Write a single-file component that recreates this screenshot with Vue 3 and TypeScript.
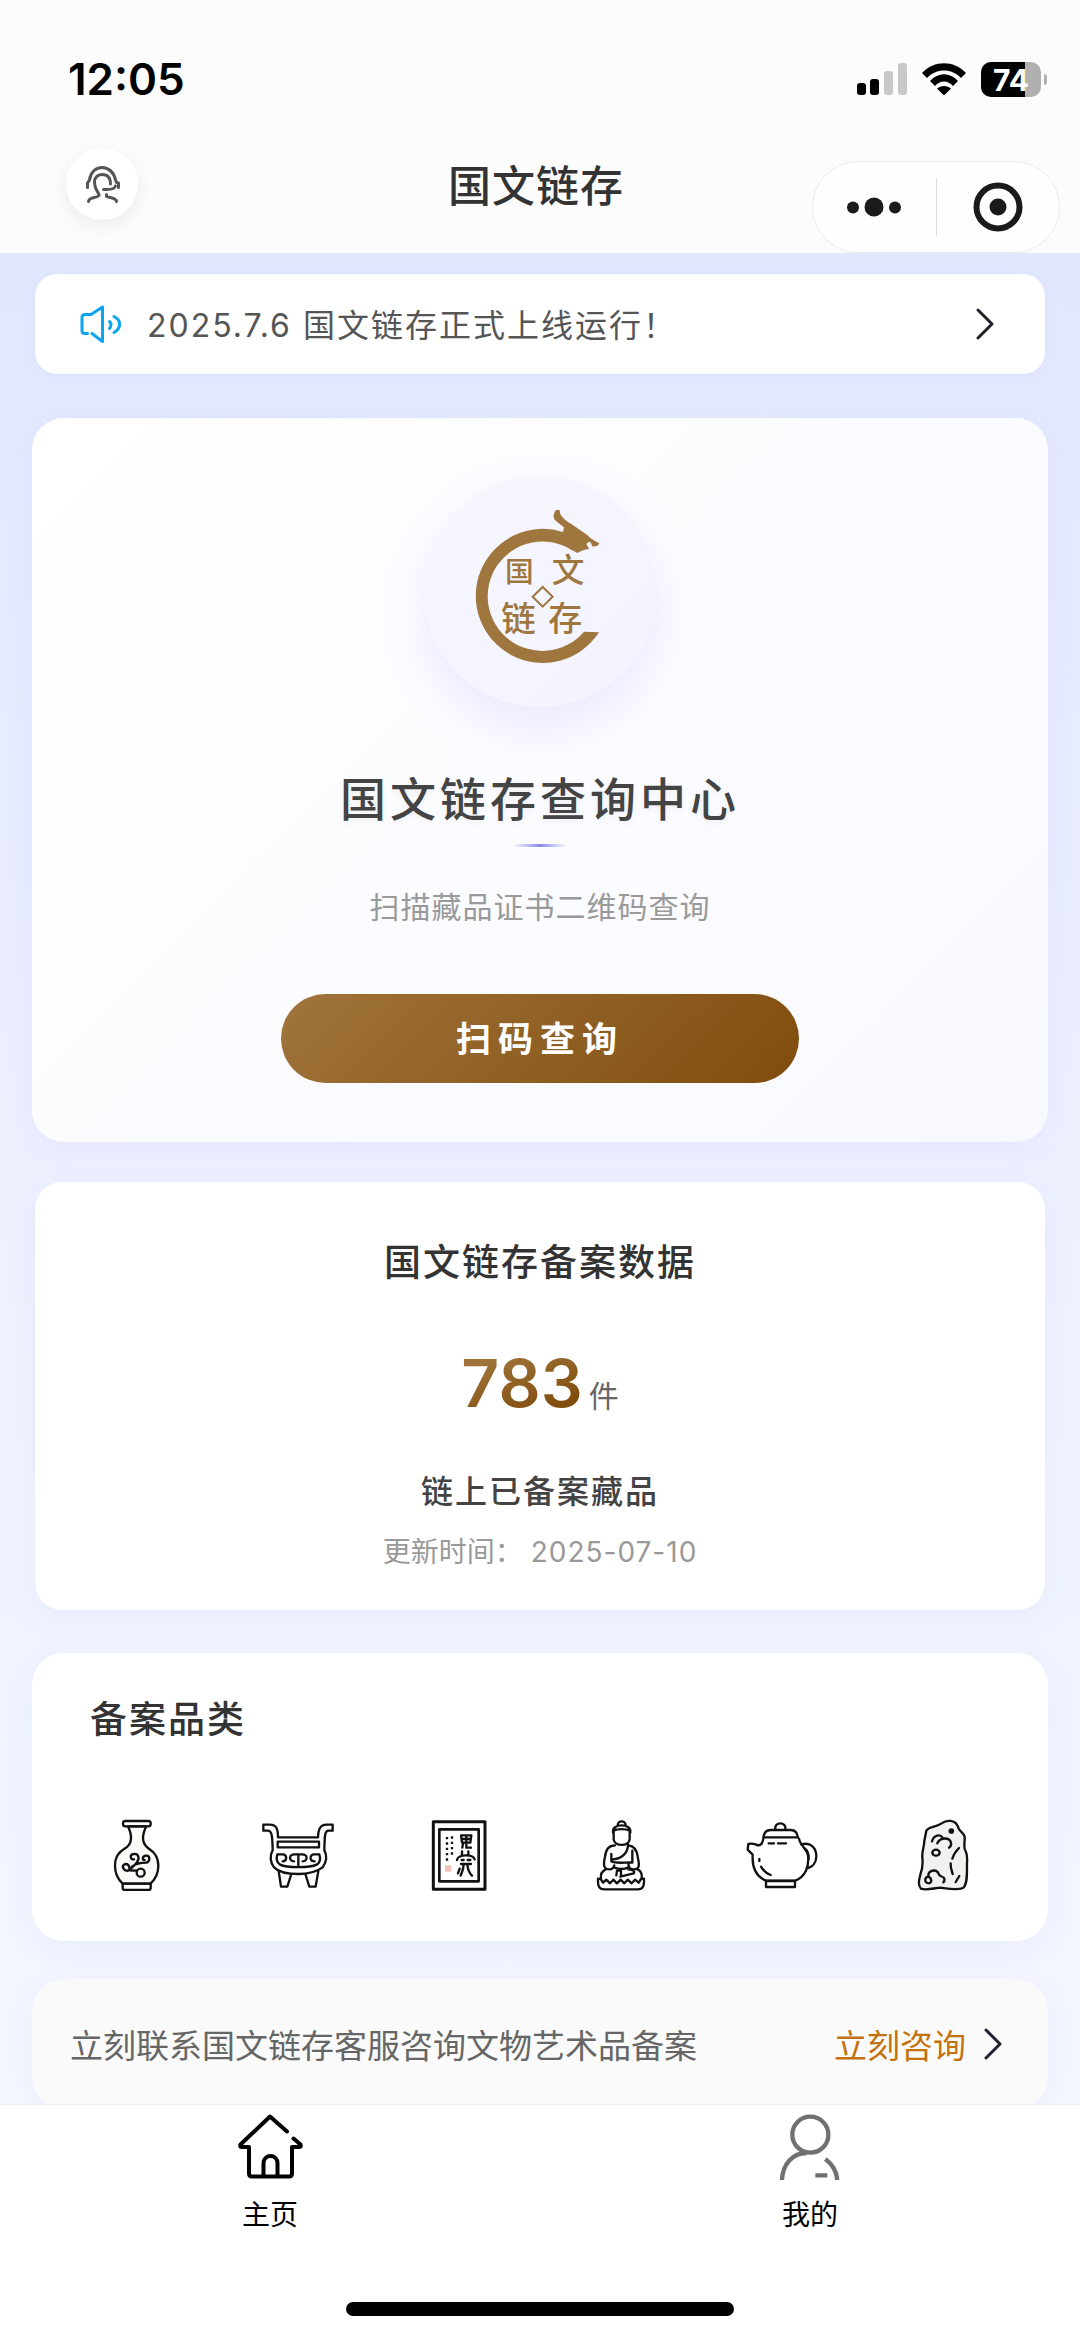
<script setup lang="ts">
import { ref } from 'vue'

type TabKey = 'home' | 'mine'

const activeTab = ref<TabKey>('home')
const batteryLevel = 74
const recordCount = 783
const updatedAt = '2025-07-10'
</script>

<template>
  <div class="page">
    <header class="header">
      <div class="status">
        <span class="time">12:05</span>
        <div class="indicators">
          <svg class="signal" viewBox="0 0 50 32" aria-hidden="true">
            <rect x="0" y="20" width="9" height="12" rx="3" />
            <rect x="13" y="16" width="9" height="16" rx="3" />
            <rect x="27" y="8" width="9" height="24" rx="3" fill="#c8c8c8" />
            <rect x="41" y="0" width="9" height="32" rx="3" fill="#c8c8c8" />
          </svg>
          <svg class="wifi" viewBox="0 0 44 32" aria-hidden="true">
            <path d="M0 10C12-3 32-3 44 10L39 15C30 5 14 5 5 15Z" />
            <path d="M8 18C16 9 28 9 36 18L31 23C26 17 18 17 13 23Z" />
            <path d="M15 25.500C19 22 25 22 29 25.500L22 32.500Z" />
          </svg>
          <div class="battery">
            <div class="battery-body">
              <span class="battery-fill" :style="{ width: batteryLevel + '%' }"></span>
              <span class="battery-text">{{ batteryLevel }}</span>
            </div>
            <span class="battery-nub"></span>
          </div>
        </div>
      </div>
      <div class="nav">
        <button class="service" type="button" aria-label="客服">
          <svg viewBox="82 163 40 40" aria-hidden="true">
            <path d="M87.500 186.500V182L89.500 179C90.500 171 96 166.500 102 166.500S114 171 115.500 179L116.500 181.500L118.500 182V186.500" />
            <path d="M88.500 200.500C89 195.500 97 197.500 99 194.500C99.500 191.500 94.500 189.500 94.500 181.500C94.500 176.500 97.500 173.500 102 173.500C107 173.500 110.500 176.500 110.500 183" />
            <path d="M103.500 188.500H107C112 188.500 115 187 115.500 185" />
            <path d="M106.500 193.500V195.500C111 197.500 116 196.500 116.500 200.500" />
          </svg>
        </button>
        <h1 class="nav-title">国文链存</h1>
        <div class="capsule">
          <button type="button" aria-label="更多">
            <svg class="dots" viewBox="0 0 56 20" aria-hidden="true">
              <circle cx="7" cy="10.500" r="6" />
              <circle cx="28" cy="10" r="9.500" />
              <circle cx="49" cy="10.500" r="6" />
            </svg>
          </button>
          <button type="button" aria-label="关闭">
            <svg class="target" viewBox="0 0 50 50" aria-hidden="true">
              <circle cx="25" cy="25" r="21.500" fill="none" stroke="#1a1a1a" stroke-width="6" />
              <circle cx="25" cy="25" r="8.500" />
            </svg>
          </button>
        </div>
      </div>
    </header>

    <main class="content">
      <a class="notice" href="#notice">
        <svg class="speaker" viewBox="78 300 48 48" aria-hidden="true">
          <path d="M87.500 333.500H85Q82 333.500 82 330.500V317.500Q82 314.500 85 314.500H91L102.500 307V341.500L92 333.500" />
          <path d="M109.500 321.500Q112.500 324 109.500 328.500" />
          <path d="M114 316.500C121.500 320 121.500 328.500 114 332.500" />
        </svg>
        <span class="notice-text">2025.7.6 国文链存正式上线运行！</span>
        <svg class="chevron" viewBox="0 0 18 34" aria-hidden="true"><path d="M2 3L16 17L2 31" /></svg>
      </a>

      <section class="hero">
        <div class="emblem">
          <svg viewBox="198 171 504 504" role="img" aria-label="国文链存">
            <path d="M627 547A201 201 0 1 1 519 246L522 232C505 216 488 212 491 195C493 179 505 176 510 182C506 196 528 213 545 223L592 255C600 266 615 272 628 280C626 288 616 290 606 289C605 282 603 276 598 276C590 276 587 284 594 290L597 297C584 299 574 302 562 309C556 305 550 302 543 299A164 164 0 1 0 582 545Z" />
            <path d="M458 411L488 440L458 470L428 440Z" fill="none" stroke="#a0763f" stroke-width="6" />
            <g class="emblem-text">
              <text x="388" y="396" font-size="86">国</text>
              <text x="534" y="396" font-size="98">文</text>
              <text x="386" y="542" font-size="104">链</text>
              <text x="526" y="542" font-size="102">存</text>
            </g>
          </svg>
        </div>
        <h2 class="hero-title">国文链存查询中心</h2>
        <div class="hero-line"></div>
        <p class="hero-sub">扫描藏品证书二维码查询</p>
        <button class="scan" type="button">扫码查询</button>
      </section>

      <section class="data">
        <h2 class="card-title">国文链存备案数据</h2>
        <p class="count"><strong>{{ recordCount }}</strong><span>件</span></p>
        <p class="data-label">链上已备案藏品</p>
        <p class="data-date"><span>更新时间：</span><time>{{ updatedAt }}</time></p>
      </section>

      <section class="categories">
        <h2 class="card-title">备案品类</h2>
        <div class="icons">
          <button type="button" aria-label="瓷器">
            <svg viewBox="303 537 216 216" aria-hidden="true">
              <path d="M384 559C396 585 398 607 380 622C350 640 345 655 345 678C345 700 354 718 368 731H452C467 716 475 700 475 678C475 652 465 638 444 624C423 608 426 585 439 559Z" fill="#fbfaf6" />
              <rect x="369" y="543" width="83" height="16" rx="7" />
              <path d="M368 731V744Q368 750 374 750H446Q452 750 452 744V731Z" />
              <path d="M402 658C390 660 388 642 402 642C416 640 420 656 410 668C402 680 390 688 384 692C372 694 364 680 372 674C382 668 390 678 388 686M396 680C410 668 430 668 440 668C452 662 450 646 438 647C426 648 426 662 434 660M388 690C396 692 402 692 410 692" />
              <circle cx="422" cy="698" r="12" />
            </svg>
          </button>
          <button type="button" aria-label="青铜器">
            <svg viewBox="786 537 216 216" aria-hidden="true">
              <path d="M790 554H810C830 554 834 568 834 592H954C955 568 960 554 980 554H998V572H986C974 572 974 588 973 630C982 648 978 668 968 682C950 695 925 702 895 702S836 696 822 682C812 668 808 650 818 630C817 588 816 572 803 572H790Z" />
              <path d="M833 605H957V622H833Z" />
              <path d="M832 643H848C862 643 862 664 848 664M832 643C828 656 832 668 840 674C860 684 930 684 950 674C960 668 962 656 958 643H942C928 643 928 664 944 664M895 643V680M895 643H884C866 643 866 664 882 664M895 643H906C924 643 924 664 908 664" />
              <path d="M836 693L843 740H862L874 702M955 693L947 740H928L916 702" />
            </svg>
          </button>
          <button type="button" aria-label="书画">
            <svg viewBox="190 117 216 216" aria-hidden="true">
              <rect x="221" y="125" width="155" height="203" stroke-width="9" />
              <rect x="239" y="148" width="118" height="156" stroke-width="8" />
              <path d="M262 171V242M277 169V228" stroke-width="7" stroke-dasharray="7 9" stroke-linecap="butt" />
              <rect x="256" y="256" width="19" height="19" fill="#f0c3b8" stroke="none" />
              <path d="M304 166H335L332 188H307ZM306 177H333M320 167V203H334M308 203L310 190M307 214V226M326 214V226M292 240C296 222 340 222 345 238M306 240H312M324 240H332M304 252H334M312 252C312 268 306 278 303 287M300 266L295 280M323 252C324 270 330 280 337 287" stroke-width="7" />
            </svg>
          </button>
          <button type="button" aria-label="佛像">
            <svg viewBox="674 117 216 216" aria-hidden="true">
              <path d="M772 136C772 120 796 120 796 136M758 158C756 142 770 136 784 136S812 142 810 158M760 152C770 146 798 146 808 152V178C806 200 762 200 760 178Z" />
              <path d="M764 196C742 196 736 212 734 230C728 256 730 268 748 268C758 268 760 262 762 256M804 196C824 198 830 212 832 230C838 256 838 268 820 268C808 268 806 262 804 252M753 222V244C765 252 802 246 816 248V212M803 192C804 218 784 238 756 238M760 262C774 268 792 268 804 262" />
              <path d="M736 268C724 274 720 284 722 296M832 268C844 274 846 284 844 296M768 286L770 272H782V290M780 290L820 280C826 274 814 268 804 268" />
              <path d="M713 296C712 318 716 328 732 328H832C848 328 852 318 851 296L842 297L835 308L824 299L814 310L802 299L792 310L781 299L770 310L759 299L749 310L738 299L728 308L721 297Z" />
            </svg>
          </button>
          <button type="button" aria-label="紫砂">
            <svg viewBox="78 117 216 216" aria-hidden="true">
              <path d="M166 148C162 124 200 124 196 148M130 172C132 158 140 150 152 150H212C226 150 232 160 234 172ZM130 176C128 190 122 196 114 196C102 190 94 190 85 192L83 209L98 224C96 260 108 290 138 302H226C256 290 268 260 264 226C260 206 240 196 237 176" />
              <path d="M244 194C272 184 290 206 289 230C288 248 278 262 262 264M254 206C262 210 266 220 266 236" />
              <path d="M138 303H225V321H138ZM146 190H162M174 190H198M118 237V243M123 260C130 272 140 280 152 285" />
            </svg>
          </button>
          <button type="button" aria-label="玉石">
            <svg viewBox="562 117 216 216" aria-hidden="true">
              <path d="M620 152C628 138 650 142 666 130C682 118 706 120 714 138C718 156 732 156 735 170C736 190 730 202 738 214C746 230 741 240 742 262C742 290 742 316 730 324C712 332 684 326 664 323C644 324 620 332 604 326C594 314 598 300 602 284C610 262 610 250 608 234C606 214 614 200 614 182Z" fill="#f1f1f0" />
              <path d="M637 184C642 164 662 162 668 172M653 190C662 170 690 172 694 188C696 198 692 200 688 203M718 204C710 212 702 222 698 236M693 250C692 262 696 270 699 282M719 288L708 306" />
              <ellipse cx="649" cy="218" rx="11" ry="9" />
              <circle cx="695" cy="153" r="5" fill="#111" />
              <path d="M628 290C614 290 612 310 628 310C638 308 636 294 626 290C624 270 650 266 656 280C658 290 668 288 673 294C676 300 674 304 671 307" />
            </svg>
          </button>
        </div>
      </section>

      <section class="contact">
        <span class="contact-text">立刻联系国文链存客服咨询文物艺术品备案</span>
        <a class="contact-link" href="#contact">
          <span>立刻咨询</span>
          <svg class="chevron" viewBox="0 0 18 34" aria-hidden="true"><path d="M2 3L16 17L2 31" /></svg>
        </a>
      </section>
    </main>

    <footer class="footer">
      <nav class="tabs">
        <button type="button" :aria-pressed="activeTab === 'home'" @click="activeTab = 'home'">
          <svg viewBox="237 2114 66 66" aria-hidden="true" class="home-icon">
            <path d="M287 2131.500L270 2116.500L240.500 2144.500Q239.500 2147 242 2147H249V2173.500Q249 2176.500 252 2176.500H289Q292 2176.500 292 2173.500V2147H299Q301.500 2147 300.500 2144.500L293.500 2138.500M263.500 2176V2163.500C263.500 2153.500 277.500 2153.500 277.500 2163.500V2176" />
          </svg>
          <span>主页</span>
        </button>
        <button type="button" :aria-pressed="activeTab === 'mine'" @click="activeTab = 'mine'">
          <svg viewBox="231 462 198 198" aria-hidden="true" class="mine-icon">
            <circle cx="331" cy="524" r="54" />
            <path d="M246 660C248 612 278 579 320 579M376 597C396 612 410 632 412 660M346 646H382" />
          </svg>
          <span>我的</span>
        </button>
      </nav>
      <div class="home-bar"></div>
    </footer>
  </div>
</template>

<style>
body {
  margin: 0;
}
</style>

<style scoped>
.page {
  display: flex;
  flex-direction: column;
  height: 100vh;
  overflow: hidden;
  background: #fff;
  color: #333;
  font-family: Inter, "Noto Sans CJK SC", sans-serif;
}

.page * {
  box-sizing: border-box;
}

h1,
h2,
p {
  margin: 0;
}

button {
  padding: 0;
  border: 0;
  background: none;
  color: inherit;
  font: inherit;
}

a {
  color: inherit;
  text-decoration: none;
}

svg {
  display: block;
  flex: none;
}

.header {
  flex: none;
  padding-top: 48px;
  background: #fcfcfc;
}

.status {
  display: flex;
  align-items: center;
  justify-content: space-between;
  height: 62px;
  padding: 0 33px 0 68px;
}

.time {
  color: #000;
  font-size: 44px;
  font-weight: 600;
  line-height: 62px;
}

.indicators {
  display: flex;
  align-items: center;
  gap: 15px;
}

.signal {
  width: 50px;
  height: 32px;
}

.wifi {
  width: 44px;
  height: 32px;
}

.battery {
  display: flex;
  align-items: center;
  gap: 3px;
}

.battery-body {
  position: relative;
  width: 60px;
  height: 35px;
  overflow: hidden;
  border-radius: 10px;
  background: #b0b0b0;
}

.battery-fill {
  position: absolute;
  inset: 0 auto 0 0;
  background: #000;
}

.battery-text {
  position: relative;
  display: block;
  color: #fff;
  font-size: 30px;
  font-weight: 700;
  line-height: 36px;
  text-align: center;
}

.battery-nub {
  width: 3px;
  height: 11px;
  border-radius: 0 3px 3px 0;
  background: #b0b0b0;
}

.nav {
  display: grid;
  grid-template-columns: 248px 1fr 248px;
  align-items: center;
  height: 143px;
  padding: 4px 20px 0 66px;
}

.service {
  display: flex;
  align-items: center;
  justify-content: center;
  width: 72px;
  height: 72px;
  border-radius: 50%;
  background: #fff;
  box-shadow: 0 6px 20px rgba(0, 0, 0, 0.07);
}

.service svg {
  width: 40px;
  height: 40px;
  fill: none;
  stroke: #555;
  stroke-width: 3;
  stroke-linecap: round;
  stroke-linejoin: round;
}

.nav-title {
  margin-right: 54px;
  padding-top: 4px;
  color: #333;
  font-size: 43px;
  font-weight: 500;
  letter-spacing: 1px;
  line-height: 60px;
  text-align: center;
}

.capsule {
  display: flex;
  align-self: end;
  align-items: center;
  height: 92px;
  border: 1px solid #ebebeb;
  border-radius: 46px;
  background: #fefefe;
}

.capsule button {
  display: flex;
  flex: 1;
  align-items: center;
  justify-content: center;
  height: 58px;
}

.capsule button + button {
  border-left: 1px solid #dedede;
}

.capsule svg {
  fill: #1a1a1a;
}

.dots {
  width: 56px;
  height: 20px;
}

.target {
  width: 50px;
  height: 50px;
}

.content {
  flex: 1;
  min-height: 0;
  padding: 21px 32px 40px;
  overflow-y: auto;
  scrollbar-width: none;
  background: linear-gradient(180deg, #e2e7ff 0%, #edf0ff 50%, #f4f7ff 100%);
}

.notice {
  display: flex;
  align-items: center;
  height: 100px;
  margin: 0 3px 44px;
  padding: 0 51px 0 43px;
  border-radius: 22px;
  background: #fff;
  box-shadow: 0 4px 20px rgba(100, 100, 220, 0.04);
}

.speaker {
  width: 48px;
  height: 48px;
  fill: none;
  stroke: #0aa5f0;
  stroke-width: 3;
  stroke-linecap: round;
  stroke-linejoin: round;
}

.notice-text {
  flex: 1;
  margin-left: 21px;
  padding-top: 3px;
  color: #555;
  font-size: 32px;
  letter-spacing: 2px;
  line-height: 48px;
  white-space: nowrap;
}

.chevron {
  width: 18px;
  height: 34px;
  fill: none;
  stroke: #22222e;
  stroke-width: 3;
  stroke-linecap: round;
  stroke-linejoin: round;
}

.hero,
.data,
.categories,
.contact {
  border-radius: 32px;
  box-shadow: 0 8px 32px rgba(100, 100, 200, 0.06);
}

.hero {
  display: flex;
  flex-direction: column;
  align-items: center;
  margin-bottom: 40px;
  padding: 57px 0 59px;
  background: linear-gradient(135deg, #fff 0%, #f8f9ff 100%);
}

.emblem {
  display: flex;
  align-items: center;
  justify-content: center;
  width: 232px;
  height: 232px;
  border-radius: 50%;
  background: linear-gradient(135deg, #f6f7ff 0%, #f2f3ff 100%);
  box-shadow: 0 20px 48px rgba(100, 100, 255, 0.13);
}

.emblem svg {
  width: 168px;
  height: 168px;
  fill: #a0763f;
}

.emblem-text {
  font-family: "Noto Sans CJK SC", sans-serif;
  font-weight: 500;
  text-anchor: middle;
}

.hero-title {
  margin-top: 60px;
  color: #444;
  font-size: 46px;
  font-weight: 500;
  letter-spacing: 4px;
  line-height: 64px;
  text-shadow: 0 3px 6px rgba(0, 0, 0, 0.05);
}

.hero-line {
  width: 54px;
  height: 3px;
  margin-top: 13px;
  background: linear-gradient(90deg, transparent, #8a8ae8, transparent);
}

.hero-sub {
  margin-top: 40px;
  color: #999;
  font-size: 30px;
  letter-spacing: 1px;
  line-height: 40px;
}

.scan {
  width: 51%;
  height: 89px;
  margin-top: 67px;
  padding-bottom: 4px;
  border-radius: 45px;
  background: linear-gradient(135deg, #a0743c 0%, #804c0c 100%);
  color: #fff;
  font-size: 35px;
  font-weight: 700;
  letter-spacing: 7px;
}

.data {
  margin: 0 3px 43px;
  padding: 57px 0 40px;
  border-radius: 27px;
  background: #fff;
  text-align: center;
}

.card-title {
  color: #333;
  font-size: 37px;
  font-weight: 500;
  letter-spacing: 2px;
  line-height: 48px;
}

.count {
  display: flex;
  align-items: baseline;
  justify-content: center;
  gap: 6px;
  height: 80px;
  margin-top: 56px;
  line-height: 80px;
}

.count strong {
  background: linear-gradient(160deg, #a0743c 20%, #804c0c 80%);
  background-clip: text;
  color: transparent;
  font-size: 66px;
  font-weight: 600;
}

.count span {
  color: #666;
  font-size: 30px;
}

.data-label {
  margin-top: 49px;
  color: #444;
  font-size: 32px;
  font-weight: 500;
  letter-spacing: 2px;
  line-height: 40px;
}

.data-date {
  display: flex;
  justify-content: center;
  gap: 8px;
  margin-top: 22px;
  color: #999;
  font-size: 28px;
  line-height: 36px;
}

.data-date time {
  letter-spacing: 1px;
}

.categories {
  margin-bottom: 38px;
  padding: 43px 24px 50px;
  background: #fff;
}

.categories .card-title {
  padding-left: 34px;
}

.icons {
  display: grid;
  grid-template-columns: repeat(6, 1fr);
  justify-items: center;
  margin-top: 75px;
}

.icons svg {
  width: 72px;
  height: 72px;
  fill: none;
  stroke: #111;
  stroke-width: 7;
  stroke-linecap: round;
  stroke-linejoin: round;
}

.contact {
  display: flex;
  align-items: center;
  justify-content: space-between;
  height: 130px;
  padding: 0 46px 0 38px;
  background: #fafafa;
  font-size: 33px;
  line-height: 48px;
  white-space: nowrap;
}

.contact span {
  padding-top: 3px;
}

.contact-text {
  color: #666;
}

.contact-link {
  display: flex;
  align-items: center;
  gap: 18px;
  color: #c4720e;
}

.footer {
  flex: none;
  padding: 9px 0 23px;
  border-top: 1px solid #f0f0f2;
  background: #fff;
}

.tabs {
  display: flex;
}

.tabs button {
  display: flex;
  flex: 1;
  flex-direction: column;
  align-items: center;
  gap: 17px;
  color: #000;
  font-size: 28px;
  line-height: 36px;
}

.tabs svg {
  width: 66px;
  height: 66px;
  fill: none;
  stroke-linecap: round;
  stroke-linejoin: round;
}

.home-icon {
  stroke: #000;
  stroke-width: 4;
}

.mine-icon {
  stroke: #707070;
  stroke-width: 13;
}

.mine-icon path {
  stroke-linecap: butt;
}

.home-bar {
  width: 36%;
  height: 14px;
  margin: 69px auto 0;
  border-radius: 7px;
  background: #000;
}
</style>
